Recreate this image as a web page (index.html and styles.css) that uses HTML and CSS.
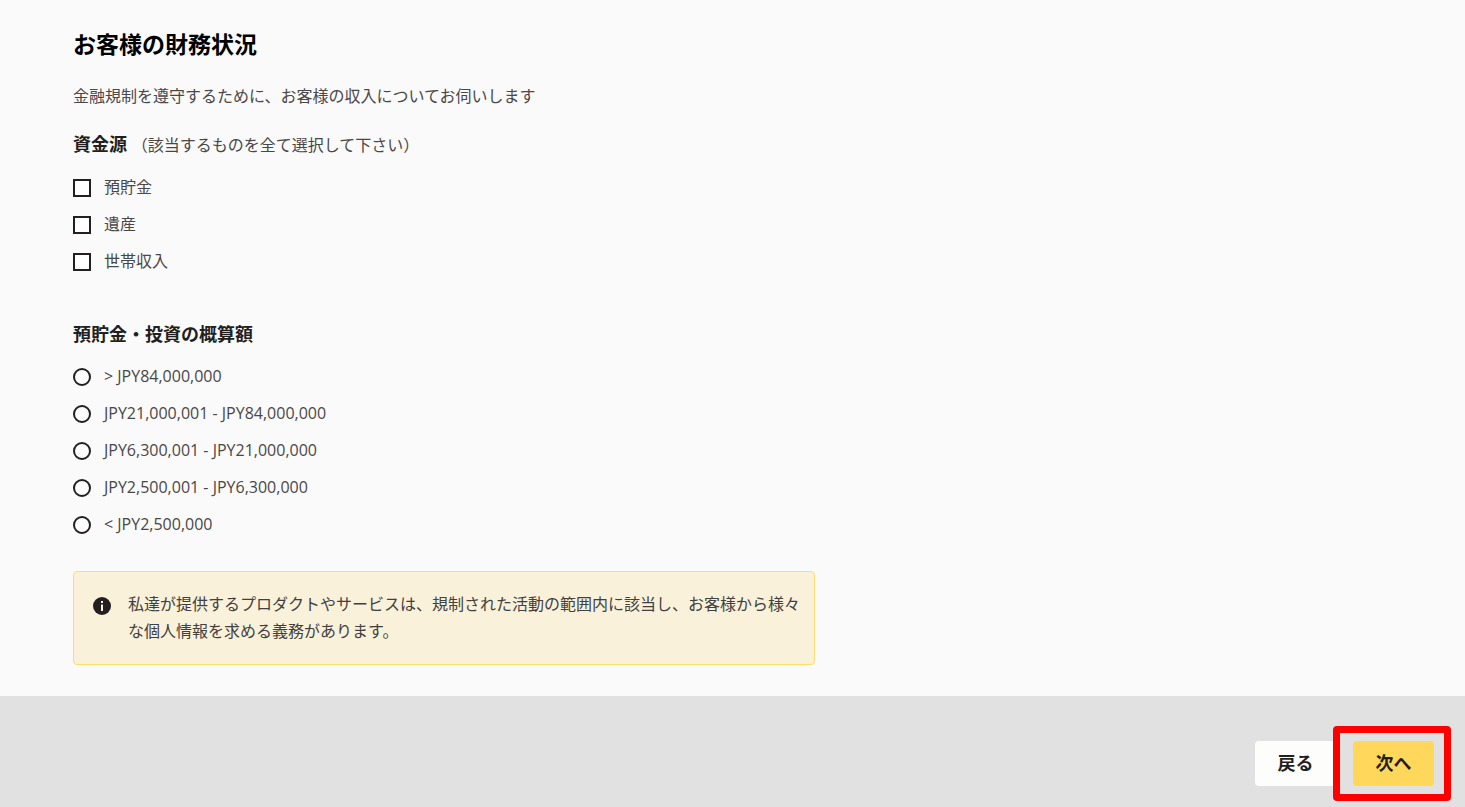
FILE: index.html
```
<!DOCTYPE html>
<html lang="ja">
<head>
  <meta charset="UTF-8">
  <meta name="viewport" content="width=device-width, initial-scale=1.0">
  <title>お客様の財務状況</title>
  <link rel="stylesheet" href="styles.css">
</head>
<body>
  <form class="page">
    <main class="content">
      <h1>お客様の財務状況</h1>
      <p class="intro">金融規制を遵守するために、お客様の収入についてお伺いします</p>

      <fieldset class="group">
        <legend>資金源 <span class="hint">（該当するものを全て選択して下さい）</span></legend>
        <label class="option"><input type="checkbox" name="source" value="savings"><span>預貯金</span></label>
        <label class="option"><input type="checkbox" name="source" value="inheritance"><span>遺産</span></label>
        <label class="option"><input type="checkbox" name="source" value="household"><span>世帯収入</span></label>
      </fieldset>

      <fieldset class="group">
        <legend>預貯金・投資の概算額</legend>
        <label class="option"><input type="radio" name="amount" value="1"><span>&gt; JPY84,000,000</span></label>
        <label class="option"><input type="radio" name="amount" value="2"><span>JPY21,000,001 - JPY84,000,000</span></label>
        <label class="option"><input type="radio" name="amount" value="3"><span>JPY6,300,001 - JPY21,000,000</span></label>
        <label class="option"><input type="radio" name="amount" value="4"><span>JPY2,500,001 - JPY6,300,000</span></label>
        <label class="option"><input type="radio" name="amount" value="5"><span>&lt; JPY2,500,000</span></label>
      </fieldset>

      <div class="notice">
        <svg class="notice-icon" viewBox="0 0 18 18" aria-hidden="true">
          <circle cx="9" cy="9" r="9" fill="#231f20"/>
          <rect x="8" y="4" width="2" height="2" fill="#faf1da"/>
          <rect x="8" y="7.5" width="2" height="6.5" fill="#faf1da"/>
        </svg>
        <p>私達が提供するプロダクトやサービスは、規制された活動の範囲内に該当し、お客様から様々な個人情報を求める義務があります。</p>
      </div>
    </main>

    <footer class="actions">
      <button type="button" class="btn btn-back">戻る</button>
      <div class="next-wrap">
        <button type="submit" class="btn btn-next">次へ</button>
        <span class="highlight"></span>
      </div>
    </footer>
  </form>
</body>
</html>
```
FILE: styles.css
```
* {
  box-sizing: border-box;
}
body {
  margin: 0;
  background: #fafafa;
  color: #4a4748;
  font-family: "Open Sans", "Noto Sans CJK JP", sans-serif;
  font-size: 16px;
  line-height: 27px;
}
.page {
  display: flex;
  flex-direction: column;
  min-height: 100vh;
}
.content {
  padding: 28px 73px 31px;
}
h1 {
  margin: 0 0 23px;
  color: #000;
  font-size: 23px;
  line-height: 32px;
}
.intro {
  margin: 0 0 21px;
}
.group {
  margin: 0 0 41px;
  padding: 0;
  border: none;
}
.group + .notice {
  margin-top: -13px;
}
legend {
  padding: 0;
  margin-bottom: 10px;
  color: #231f20;
  font-size: 18px;
  font-weight: bold;
}
.hint {
  color: #4a4748;
  font-size: 16px;
  font-weight: normal;
}
.option {
  display: flex;
  align-items: center;
  gap: 13px;
  width: fit-content;
  height: 37px;
  cursor: pointer;
}
.option input {
  appearance: none;
  width: 18px;
  height: 18px;
  margin: 0;
  border: 2px solid #231f20;
  background: #fff;
}
.option input[type="radio"] {
  border-radius: 50%;
}
.option input[type="checkbox"]:checked,
.option input[type="radio"]:checked {
  background: #231f20;
  box-shadow: inset 0 0 0 3px #fff;
}
.notice {
  display: flex;
  gap: 17px;
  max-width: 742px;
  padding: 19px 12px 19px 19px;
  border: 1px solid #ffdb70;
  border-radius: 4px;
  background: #faf1da;
  color: #413f40;
}
.notice p {
  margin: 0;
}
.notice-icon {
  flex: none;
  width: 18px;
  height: 18px;
  margin-top: 6px;
}
.actions {
  display: flex;
  flex: 1;
  align-items: flex-start;
  justify-content: flex-end;
  gap: 17px;
  padding: 45px 31px 21px;
  background: #e1e1e1;
}
.btn {
  display: block;
  min-width: 81px;
  height: 45px;
  padding: 0 22px 4px;
  border: none;
  border-radius: 4px;
  color: #231f20;
  font-family: inherit;
  font-size: 18px;
  font-weight: bold;
  cursor: pointer;
}
.btn-back {
  background: #fdfdfc;
}
.btn-next {
  background: #ffd75a;
}
.next-wrap {
  position: relative;
}
/* red frame around the next button */
.highlight {
  position: absolute;
  inset: -15px -17px -15px -20px;
  border: 7px solid #f00;
  border-radius: 4px;
  pointer-events: none;
}
```
